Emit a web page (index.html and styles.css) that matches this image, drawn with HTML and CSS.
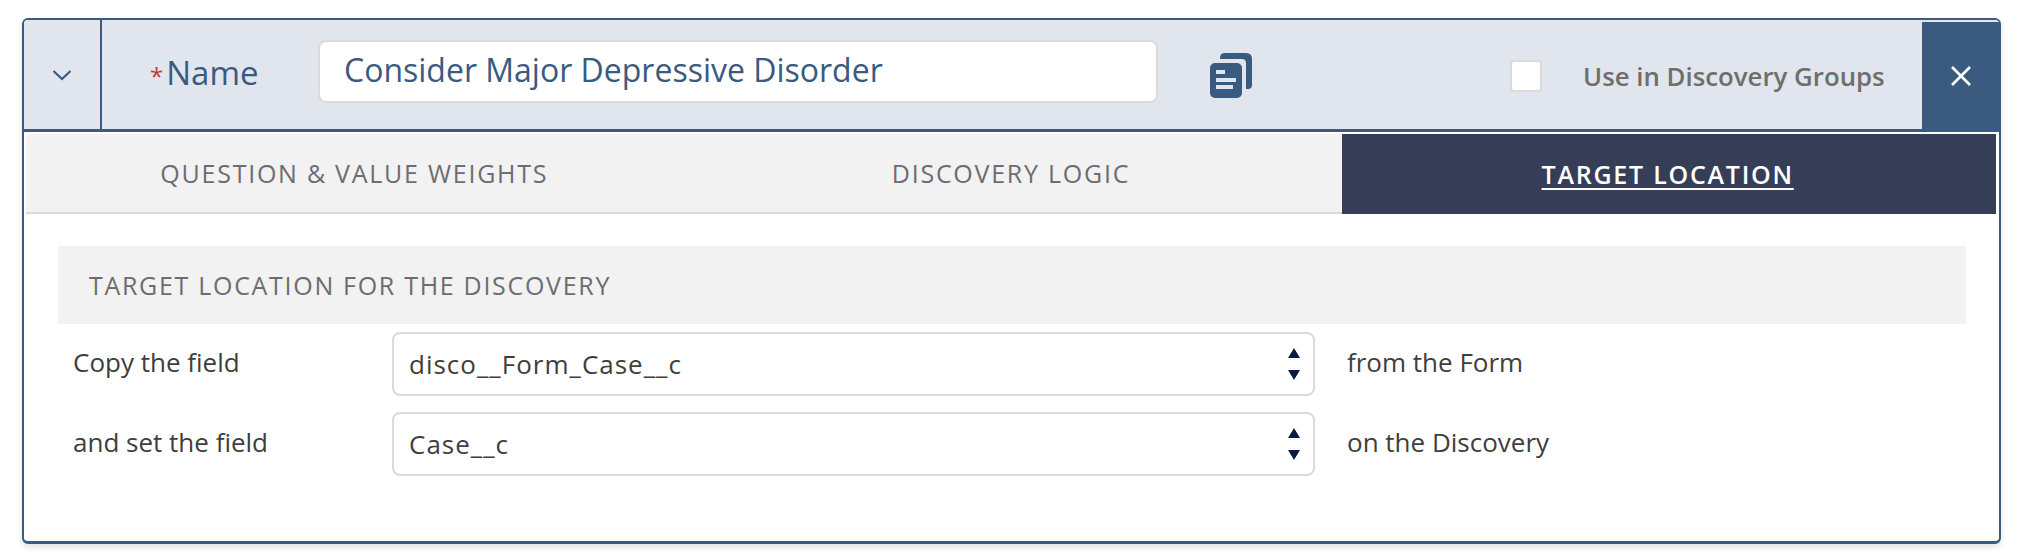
FILE: index.html
```html
<!DOCTYPE html>
<html lang="en">
<head>
<meta charset="utf-8">
<title>Discovery</title>
<link rel="stylesheet" href="styles.css">
</head>
<body>
<section class="panel">
  <header class="head">
    <div class="toggle">
      <svg width="22" height="14" viewBox="0 0 22 14"><path d="M2.5 3 L11 11 L19.5 3" fill="none" stroke="#3a5a80" stroke-width="2.2"/></svg>
    </div>
    <div class="name-label"><span class="req">*</span>Name</div>
    <div class="name-input">Consider Major Depressive Disorder</div>
    <svg class="copy" width="42" height="45" viewBox="0 0 42 45">
      <path d="M10 5 Q10 0 15 0 H36 Q42 0 42 6 V32 Q42 36 38 36 H36 V10 Q36 6 32 6 H10 Z" fill="#3a5a80"/>
      <rect x="0" y="10" width="32" height="35" rx="5" fill="#3a5a80"/>
      <rect x="6" y="17" width="9" height="4" fill="#e0e5ee"/>
      <rect x="6" y="25" width="20" height="4" fill="#e0e5ee"/>
      <rect x="6" y="32" width="17" height="4" fill="#e0e5ee"/>
    </svg>
    <div class="group-check">
      <span class="box"></span>
      <span class="group-label">Use in Discovery Groups</span>
    </div>
    <div class="close">
      <svg width="24" height="24" viewBox="0 0 24 24"><path d="M3 3 L21 21 M21 3 L3 21" stroke="#fff" stroke-width="2.6" fill="none"/></svg>
    </div>
  </header>
  <div class="body">
    <nav class="tabs">
      <div class="tab">QUESTION &amp; VALUE WEIGHTS</div>
      <div class="tab">DISCOVERY LOGIC</div>
      <div class="tab active">TARGET LOCATION</div>
    </nav>
    <div class="content">
      <h2 class="section">TARGET LOCATION FOR THE DISCOVERY</h2>
      <div class="row">
        <div class="row-label">Copy the field</div>
        <div class="select">disco__Form_Case__c
          <svg class="arrows" width="12" height="32" viewBox="0 0 12 32"><path d="M6 0 L12 10 H0 Z M0 22 H12 L6 32 Z" fill="#061c3f"/></svg>
        </div>
        <div class="row-note">from the Form</div>
      </div>
      <div class="row">
        <div class="row-label">and set the field</div>
        <div class="select">Case__c
          <svg class="arrows" width="12" height="32" viewBox="0 0 12 32"><path d="M6 0 L12 10 H0 Z M0 22 H12 L6 32 Z" fill="#061c3f"/></svg>
        </div>
        <div class="row-note">on the Discovery</div>
      </div>
    </div>
  </div>
</section>
</body>
</html>
```

FILE: styles.css
```css
* { box-sizing: border-box; }
html, body { margin: 0; background: #fff; }
body { font-family: "Open Sans", "Noto Sans", sans-serif; height: 560px; overflow: hidden; }

.panel {
  width: 1979px;
  height: 526px;
  margin: 18px 0 0 22px;
  border: 2px solid #3a5a80;
  border-bottom-width: 3px;
  border-radius: 6px;
  box-shadow: 0 3px 6px rgba(0, 0, 0, .12);
  display: flex;
  flex-direction: column;
  background: #fff;
  overflow: hidden;
}

.head {
  height: 112px;
  flex: none;
  background: #e0e5ee;
  border-bottom: 3px solid #3a5a80;
  display: flex;
  align-items: center;
}
.toggle {
  width: 78px;
  height: 100%;
  border-right: 2px solid #3a5a80;
  display: flex;
  align-items: center;
  justify-content: center;
}
.name-label {
  width: 216px;
  padding-left: 48px;
  font-size: 33px;
  color: #3a5a80;
  line-height: 36px;
}
.req { color: #c23934; font-size: 24px; margin-right: 3px; }
.name-input {
  width: 840px;
  height: 63px;
  background: #fff;
  border: 2px solid #dddbda;
  border-radius: 8px;
  margin-top: -6px;
  padding-left: 24px;
  font-size: 32px;
  line-height: 56px;
  color: #3a5a80;
  white-space: nowrap;
}
.copy { margin-left: 52px; flex: none; margin-top: 2px; }
.group-check {
  display: flex;
  align-items: center;
  margin-left: 258px;
  margin-top: 3px;
}
.box {
  width: 32px;
  height: 32px;
  background: #fff;
  border: 2px solid #dddbda;
  border-radius: 4px;
  margin-right: 41px;
}
.group-label {
  font-size: 25.8px;
  font-weight: 600;
  color: #706e6b;
  white-space: nowrap;
}
.close {
  margin-left: auto;
  width: 77px;
  height: 100%;
  margin-bottom: -3px;
  background: #3a5a80;
  display: flex;
  align-items: center;
  justify-content: center;
}

.body { flex: 1; padding: 0 3px 0 2px; display: flex; flex-direction: column; }
.tabs {
  display: grid;
  grid-template-columns: repeat(3, 1fr);
  height: 80px;
  flex: none;
  margin-top: 2px;
  background: #f2f2f2;
  border-bottom: 2px solid #dddbda;
  border-radius: 6px 0 0 0;
}
.tab {
  display: flex;
  align-items: center;
  justify-content: center;
  font-size: 25px;
  letter-spacing: 1.75px;
  color: #6b6d70;
}
.tab.active {
  background: #363e57;
  color: #fff;
  font-weight: 600;
  text-decoration: underline;
  text-underline-offset: 4px;
  margin-bottom: -2px;
  margin-left: 3px;
  padding-right: 3px;
}

.content { padding: 32px 30px 0 32px; }
.section {
  margin: 0;
  height: 78px;
  background: #f2f2f2;
  padding-left: 31px;
  display: flex;
  align-items: center;
  font-size: 25px;
  font-weight: 400;
  letter-spacing: 1.7px;
  color: #6b6d70;
}
.row {
  display: flex;
  align-items: center;
  height: 64px;
  margin-top: 8px;
}
.row + .row { margin-top: 16px; }
.row-label {
  width: 334px;
  padding-left: 15px;
  font-size: 26px;
  color: #3e3e3c;
  margin-top: -4px;
}
.select {
  position: relative;
  width: 923px;
  height: 64px;
  border: 2px solid #dddbda;
  border-radius: 8px;
  padding-left: 15px;
  font-size: 26px;
  letter-spacing: 1px;
  line-height: 61px;
  color: #3e3e3c;
}
.arrows { position: absolute; right: 13px; top: 14px; }
.row-note {
  margin-left: 32px;
  font-size: 26px;
  color: #3e3e3c;
  margin-top: -4px;
}
```
